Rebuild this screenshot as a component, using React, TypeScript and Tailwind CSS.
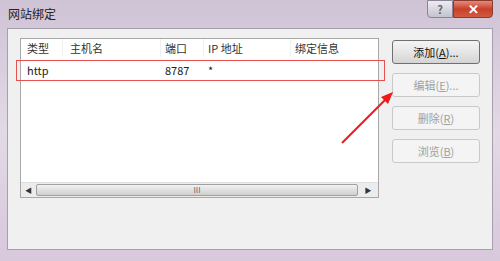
import React from "react";

const font = { fontFamily: '"Noto Sans CJK SC", "Liberation Sans", sans-serif' };

function Btn({ label, disabled }: { label: React.ReactNode; disabled?: boolean }) {
  return (
    <div
      className={
        "h-[24px] w-[88px] rounded-[3px] border flex items-center justify-center text-[11px] " +
        (disabled
          ? "border-[#c9c9c9] bg-[#f4f4f4] text-[#a0a0a0]"
          : "border-[#707070] bg-gradient-to-b from-[#f4f4f4] via-[#e6e6e6] to-[#d4d4d4] text-[#111]")
      }
    >
      {label}
    </div>
  );
}

export default function App() {
  return (
    <div
      className="relative w-[500px] h-[261px] overflow-hidden bg-gradient-to-b from-[#cfc3d6] via-[#e2d9e6] to-[#d8c8dc] flex flex-col"
      style={font}
    >
      {/* title bar */}
      <div className="h-[28px] flex items-start relative">
        <div className="pl-[8px] pt-[5px] text-[12px] text-[#222]">网站绑定</div>
        <div className="absolute right-[7px] top-0 flex">
          <div className="w-[26px] h-[18px] rounded-bl-[4px] border border-[#8a8696] bg-gradient-to-b from-[#eeecf2] to-[#c4c2cf] flex items-center justify-center text-[11px] text-[#666] font-bold">
            ?
          </div>
          <div className="w-[40px] h-[18px] rounded-br-[4px] border border-[#8a3a30] bg-gradient-to-b from-[#e48a78] via-[#c8402a] to-[#d05a40] flex items-center justify-center text-[13px] text-white font-bold">
            ✕
          </div>
        </div>
      </div>
      {/* client */}
      <div className="mx-[7px] h-[222px] border border-[#a5a0aa] bg-[#f0f0f0] flex pt-[9px] pl-[12px]">
        <div className="w-[359px] h-[160px] border border-[#a8a8a8] bg-white flex flex-col">
          <div className="h-[18px] flex text-[11px] text-[#333] items-center">
            <div className="w-[42px] pl-[6px] border-r border-[#f0f0f0] h-full flex items-center">类型</div>
            <div className="w-[98px] pl-[7px] border-r border-[#f0f0f0] h-full flex items-center">主机名</div>
            <div className="w-[43px] pl-[4px] border-r border-[#f0f0f0] h-full flex items-center">端口</div>
            <div className="w-[87px] pl-[4px] border-r border-[#f0f0f0] h-full flex items-center">IP 地址</div>
            <div className="flex-1 pl-[4px] h-full flex items-center">绑定信息</div>
          </div>
          <div className="h-[22px] flex text-[11px] text-[#222] items-center mt-[2px]">
            <div className="w-[42px] pl-[6px]">http</div>
            <div className="w-[98px]" />
            <div className="w-[43px] pl-[4px]">8787</div>
            <div className="w-[87px] pl-[4px]">*</div>
          </div>
          <div className="flex-1" />
          <div className="h-[15px] flex bg-[#ececec] border-t border-[#e0e0e0]">
            <div className="w-[15px] flex items-center justify-center text-[7px] text-[#333]">◀</div>
            <div className="flex-1 my-[1px] rounded-[2px] border border-[#a0a0a0] bg-gradient-to-b from-[#f2f2f2] to-[#cfcfcf] flex items-center justify-center text-[8px] text-[#666]">
              III
            </div>
            <div className="w-[20px] flex items-center justify-center text-[7px] text-[#333]">▶</div>
          </div>
        </div>
        <div className="ml-[13px] flex flex-col gap-[9px] pt-[2px]">
          <Btn label={<span>添加(<u>A</u>)...</span>} />
          <Btn label={<span>编辑(<u>E</u>)...</span>} disabled />
          <Btn label={<span>删除(<u>R</u>)</span>} disabled />
          <Btn label={<span>浏览(<u>B</u>)</span>} disabled />
        </div>
      </div>
      {/* red highlight rectangle */}
      <div className="absolute left-[16px] top-[60px] w-[369px] h-[21px] border border-[#e85050]" />
      {/* arrow */}
      <svg className="absolute left-0 top-0" width="500" height="261">
        <line x1="342" y1="143" x2="388" y2="97" stroke="#f01818" strokeWidth="2" />
        <polygon points="393,92 381,97 388,104" fill="#f01818" />
      </svg>
    </div>
  );
}
